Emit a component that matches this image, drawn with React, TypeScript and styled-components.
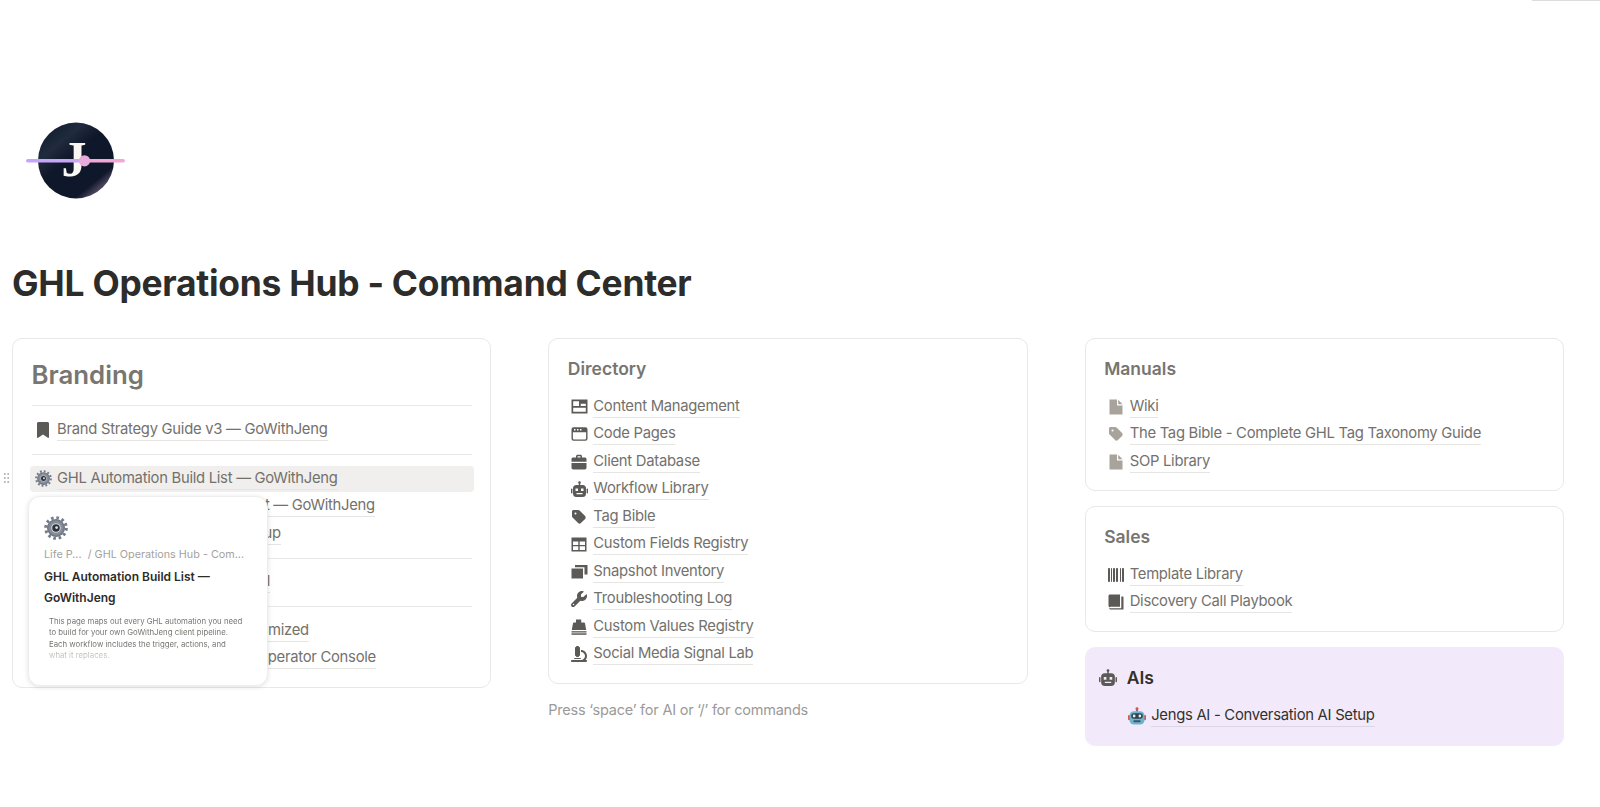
import React from "react";
import styled, { createGlobalStyle } from "styled-components";
import { FaBookmark, FaTag, FaWrench, FaMicroscope, FaBarcode } from "react-icons/fa6";

const Global = createGlobalStyle`
  html, body { margin: 0; padding: 0; background: #fff; }
  body { font-family: Inter, "Liberation Sans", sans-serif; overflow: hidden; }
`;

const Page = styled.div`
  display: flex;
  flex-direction: column;
  height: 807px;
  padding: 0 36px 0 12px;
  box-sizing: border-box;
`;
const TopLine = styled.div`
  align-self: flex-end;
  width: 68px;
  height: 1px;
  margin-right: -36px;
  background: #dcdcdc;
`;
const LogoSlot = styled.div`
  display: flex;
  margin: 118px 0 0 14px;
  height: 84px;
`;
const Title = styled.h1`
  margin: 59px 0 0;
  font-size: 35.4px;
  line-height: 44px;
  font-weight: 700;
  color: #2c2c2b;
  letter-spacing: -0.25px;
`;
const Columns = styled.div`
  display: grid;
  grid-template-columns: repeat(3, 1fr);
  column-gap: 57px;
  margin-top: 32px;
  align-items: start;
`;
const Column = styled.div`
  display: flex;
  flex-direction: column;
  gap: 15px;
`;
const Card = styled.section`
  position: relative;
  padding: 18px 18.5px 13.5px;
  border: 1px solid #e9e8e6;
  border-radius: 10px;
  background: #fff;
`;
const BrandCard = styled(Card)`
  padding-bottom: 14px;
`;
const AICard = styled.section`
  padding: 19px 14px 15px;
  border-radius: 10px;
  background: #f2eafa;
`;
const BigHeading = styled.h2`
  margin: 0 0 12px;
  font-size: 25.8px;
  line-height: 36px;
  font-weight: 600;
  color: #787671;
`;
const Heading = styled.h3`
  margin: 0 0 13px;
  font-size: 17.5px;
  line-height: 24px;
  font-weight: 600;
  color: #787570;
`;
const AIHeading = styled.h3`
  display: flex;
  align-items: center;
  gap: 10px;
  margin: 0 0 14px;
  font-size: 17.5px;
  line-height: 24px;
  font-weight: 600;
  color: #32302c;
`;
const Divider = styled.hr`
  margin: 11px 0 11px;
  border: 0;
  border-top: 1px solid #e9e8e6;
  &:first-of-type { margin: 0 0 11.5px; }
`;
const Row = styled.div<{ $active?: boolean; $indent?: number }>`
  display: flex;
  align-items: center;
  height: 25.5px;
  margin: 0 -2px 2px ${(p) => (p.$indent ? `${p.$indent}px` : "-2px")};
  border-radius: 4px;
  background: ${(p) => (p.$active ? "#f0efed" : "transparent")};
`;
const IconBox = styled.span<{ $muted?: boolean }>`
  display: flex;
  flex: none;
  align-items: center;
  justify-content: center;
  width: 27px;
  margin-right: 0.5px;
  color: ${(p) => (p.$muted ? "#a8a49c" : "#5c5a56")};
  font-size: 16px;
`;
const HeadIcon = styled.span`
  display: flex;
  flex: none;
  color: #5c5a56;
`;
const LinkText = styled.span<{ $dark?: boolean }>`
  font-size: 14.8px;
  line-height: 21px;
  letter-spacing: -0.27px;
  color: ${(p) => (p.$dark ? "#32302c" : "#73716c")};
  border-bottom: 1px solid ${(p) => (p.$dark ? "#ddd6e6" : "#e6e5e2")};
  white-space: nowrap;
`;
const Hint = styled.p`
  margin: 1px 0 0;
  font-size: 14.5px;
  line-height: 20px;
  letter-spacing: -0.22px;
  color: #9b9a97;
`;
const Handle = styled.span`
  position: absolute;
  left: -10px;
  top: 133px;
  width: 7px;
  height: 12px;
  background-image: radial-gradient(circle, #b9b8b5 1px, transparent 1.2px);
  background-size: 3.5px 4px;
`;
const Popover = styled.div`
  position: absolute;
  left: 15px;
  top: 157px;
  box-sizing: border-box;
  width: 240px;
  height: 190px;
  padding: 19px 15px 0;
  border: 1px solid #eeeeec;
  border-radius: 12px;
  background: #fff;
  box-shadow: 0 1px 5px rgba(0, 0, 0, 0.12);
`;
const Crumb = styled.div`
  margin-top: 3px;
  font-size: 10.8px;
  line-height: 16px;
  color: #a3a29e;
  white-space: nowrap;
`;
const PopTitle = styled.div`
  margin-top: 3px;
  font-size: 12px;
  line-height: 21px;
  font-weight: 600;
  color: #2c2c2b;
`;
const PopText = styled.p`
  margin: 8px 0 0 5px;
  font-size: 7.8px;
  line-height: 11.3px;
  width: 195px;
  background: linear-gradient(#6f6e6a 70%, #c2c1bd 85%);
  -webkit-background-clip: text;
  background-clip: text;
  color: transparent;
`;

const Logo = () => (
  <svg width="100" height="84" viewBox="0 0 100 84">
    <defs>
      <linearGradient id="lg" x1="0.15" y1="0.05" x2="0.9" y2="0.95">
        <stop offset="0" stopColor="#131c30" />
        <stop offset="0.22" stopColor="#202b3d" />
        <stop offset="0.42" stopColor="#0f172a" />
        <stop offset="0.8" stopColor="#0f172a" />
        <stop offset="1" stopColor="#8a7390" />
      </linearGradient>
      <linearGradient id="ll" x1="0" x2="1" y1="0" y2="0">
        <stop offset="0" stopColor="#c4a4fb" />
        <stop offset="0.55" stopColor="#c8a8f4" />
        <stop offset="0.6" stopColor="#f0a8d8" />
        <stop offset="1" stopColor="#f4a6d4" />
      </linearGradient>
    </defs>
    <circle cx="50" cy="41.500" r="38" fill="url(#lg)" />
    <text x="48" y="57" textAnchor="middle" fontFamily="'Liberation Serif', serif" fontWeight="700" fontSize="50" fill="#f9f7f2">J</text>
    <rect x="0" y="40" width="99" height="3.6" rx="1.8" fill="url(#ll)" />
    <circle cx="58.500" cy="41.800" r="5.600" fill="#e7abdc" />
  </svg>
);

const Gear = ({ size }: { size: number }) => (
  <svg width={size} height={size} viewBox="0 0 24 24">
    <defs>
      <radialGradient id="gg" cx="0.5" cy="0.5" r="0.55">
        <stop offset="0" stopColor="#3a3f48" />
        <stop offset="0.6" stopColor="#8b93a0" />
        <stop offset="1" stopColor="#59616e" />
      </radialGradient>
    </defs>
    <circle cx="12" cy="12" r="10.3" fill="none" stroke="#737b88" strokeWidth="3" strokeDasharray="2.6 2.8" />
    <circle cx="12" cy="12" r="9" fill="url(#gg)" />
    <circle cx="12" cy="12" r="4.3" fill="#2e323a" stroke="#d7dae0" strokeWidth="1.1" />
    <circle cx="12.6" cy="11.6" r="1.4" fill="#dfe2e8" />
  </svg>
);

const LayoutIcon = () => (
  <svg width="17" height="15" viewBox="0 0 17 15" fill="currentColor">
    <path fillRule="evenodd" d="M0.500 0.500h16v14h-16v-14Zm1.700 1.700V7h5.800V2.200H2.200Zm7.500 2.600v2.200h5.100V4.800H9.700Zm-7.500 3.900v4.100h12.600V8.700H2.200Z" />
  </svg>
);
const BrowserIcon = () => (
  <svg width="17" height="14" viewBox="0 0 17 14" fill="currentColor">
    <path fillRule="evenodd" d="M2.500 0.300h12a2 2 0 0 1 2 2v9.400a2 2 0 0 1-2 2h-12a2 2 0 0 1-2-2V2.300a2 2 0 0 1 2-2Zm-.6 4.900v6.400c0 .5.300.8.800.8h11.600c.5 0 .8-.3.8-.8V5.200H1.900ZM3 2h1.500v1.500H3V2Zm3 0h1.500v1.500H6V2Zm3 0h1.500v1.500H9V2Z" />
  </svg>
);
const CaseIcon = () => (
  <svg width="16" height="16" viewBox="0 0 16 16" fill="currentColor">
    <path fillRule="evenodd" d="M5 3.500V2.200C5 1.300 5.700.7 6.500.7h3c.8 0 1.500.6 1.500 1.500v1.300h2.800c1 0 1.700.7 1.700 1.700v2.600H.5V5.200c0-1 .7-1.700 1.700-1.700H5Zm1.500 0h3V2.200h-3v1.300Z" />
    <path d="M.5 9h15v4.800c0 1-.7 1.700-1.700 1.700H2.200c-1 0-1.700-.7-1.700-1.700V9Z" />
  </svg>
);
const RobotIcon = ({ size = 17 }: { size?: number }) => (
  <svg width={size} height={size} viewBox="0 0 17 17" fill="currentColor">
    <circle cx="8.500" cy="1.500" r="1.300" />
    <rect x="7.800" y="2" width="1.400" height="3" />
    <path fillRule="evenodd" d="M5.500 4h6a3.500 3.500 0 0 1 3.500 3.500v5a3.500 3.500 0 0 1-3.500 3.500h-6A3.500 3.500 0 0 1 2 12.500v-5A3.500 3.500 0 0 1 5.500 4ZM4.500 7.500v2.600h2.500V7.500H4.500Zm5.500 0v2.600h2.500V7.500H10ZM5.500 12v1.300h6V12h-6Z" />
    <rect x="0" y="7.500" width="1.400" height="5" rx=".7" />
    <rect x="15.600" y="7.500" width="1.400" height="5" rx=".7" />
  </svg>
);
const TableIcon = () => (
  <svg width="16" height="15" viewBox="0 0 16 15" fill="currentColor">
    <path fillRule="evenodd" d="M0.500 0.500h15v14h-15v-14Zm1.500 4v3.500h5.300V4.500H2Zm6.700 0v3.500H14V4.500H8.700ZM2 9.300v3.700h5.300V9.300H2Zm6.700 0v3.700H14V9.300H8.700Z" />
  </svg>
);
const CopyIcon = () => (
  <svg width="17" height="15" viewBox="0 0 17 15" fill="currentColor">
    <path d="M0.500 4.500h11.500v10H0.500z" />
    <path d="M4 1h12.500v9.500H13.500V3.300H4z" />
  </svg>
);
const RegisterIcon = () => (
  <svg width="16" height="16" viewBox="0 0 16 16" fill="currentColor">
    <path d="M5 .5h5.200v3H13c.5 0 .9.300 1 .8l1.200 6.700H.8L2 4.300c.1-.5.500-.8 1-.8h2V.5Z" />
    <rect x="0.500" y="12.200" width="15" height="1.300" />
    <rect x="0.500" y="14.300" width="15" height="1.500" />
  </svg>
);
const DocIcon = () => (
  <svg width="14" height="16" viewBox="0 0 14 16" fill="currentColor">
    <path d="M0.500 0.500h7.500v6h5.500v9H0.500z" />
    <path d="M9.200 0.800l4.300 4.500H9.200z" />
  </svg>
);
const BookIcon = () => (
  <svg width="16" height="16" viewBox="0 0 16 16" fill="currentColor">
    <path d="M2 .5h10v12.300H3c-1 0-1.500.3-1.800.8L.5 12V2C.5 1 1 .5 2 .5Z" />
    <path d="M13.300 2.500h1.200c.6 0 1 .4 1 1v12H3c-1 0-1.800-.5-2-1.300h13.300c-.5 0-1 0-1 0V2.500Z" />
  </svg>
);
const EmojiRobot = () => (
  <svg width="18" height="18" viewBox="0 0 17 17">
    <rect x="7.500" y="1.500" width="2" height="3" fill="#6f7f8f" />
    <circle cx="8.500" cy="1.700" r="1.400" fill="#e0504a" />
    <rect x="0" y="7.500" width="2" height="5" rx="1" fill="#d9584e" />
    <rect x="15" y="7.500" width="2" height="5" rx="1" fill="#d9584e" />
    <rect x="1.500" y="4" width="14" height="12.500" rx="4" fill="#6fb4cf" />
    <rect x="3" y="6" width="11" height="5" rx="2.500" fill="#33424f" />
    <circle cx="5.800" cy="8.500" r="1.300" fill="#e8eef2" />
    <circle cx="11.200" cy="8.500" r="1.300" fill="#e8eef2" />
    <rect x="5" y="12.500" width="7" height="2" rx="1" fill="#3c5566" />
  </svg>
);

type Item = { icon: React.ReactNode; text: string; muted?: boolean };

const directory: Item[] = [
  { icon: <LayoutIcon />, text: "Content Management" },
  { icon: <BrowserIcon />, text: "Code Pages" },
  { icon: <CaseIcon />, text: "Client Database" },
  { icon: <RobotIcon />, text: "Workflow Library" },
  { icon: <FaTag />, text: "Tag Bible" },
  { icon: <TableIcon />, text: "Custom Fields Registry" },
  { icon: <CopyIcon />, text: "Snapshot Inventory" },
  { icon: <FaWrench />, text: "Troubleshooting Log" },
  { icon: <RegisterIcon />, text: "Custom Values Registry" },
  { icon: <FaMicroscope />, text: "Social Media Signal Lab" },
];
const manuals: Item[] = [
  { icon: <DocIcon />, text: "Wiki", muted: true },
  { icon: <FaTag />, text: "The Tag Bible - Complete GHL Tag Taxonomy Guide", muted: true },
  { icon: <DocIcon />, text: "SOP Library", muted: true },
];
const sales: Item[] = [
  { icon: <FaBarcode />, text: "Template Library" },
  { icon: <BookIcon />, text: "Discovery Call Playbook" },
];

const Rows = ({ items }: { items: Item[] }) => (
  <>
    {items.map((it) => (
      <Row key={it.text}>
        <IconBox $muted={it.muted}>{it.icon}</IconBox>
        <LinkText>{it.text}</LinkText>
      </Row>
    ))}
  </>
);

export default function App() {
  return (
    <Page>
      <Global />
      <TopLine />
      <LogoSlot><Logo /></LogoSlot>
      <Title>GHL Operations Hub - Command Center</Title>
      <Columns>
        <Column>
          <BrandCard>
            <Handle />
            <BigHeading>Branding</BigHeading>
            <Divider />
            <Row>
              <IconBox><FaBookmark /></IconBox>
              <LinkText>Brand Strategy Guide v3 — GoWithJeng</LinkText>
            </Row>
            <Divider />
            <Row $active>
              <IconBox><Gear size={17} /></IconBox>
              <LinkText>GHL Automation Build List — GoWithJeng</LinkText>
            </Row>
            <Rows items={[
              { icon: <DocIcon />, text: "GHL Snapshot Master Build List — GoWithJeng" },
              { icon: <DocIcon />, text: "GoWithJeng Sales Pipeline Setup" },
            ]} />
            <Divider />
            <Rows items={[{ icon: <DocIcon />, text: "GoWithJeng Email Nurture Goal" }]} />
            <Divider />
            <Rows items={[
              { icon: <DocIcon />, text: "GoWithJeng Website Offer Optimized" },
              { icon: <DocIcon />, text: "GoWithJeng Voice Prompt — Operator Console" },
            ]} />
            <Popover>
              <Gear size={24} />
              <Crumb>Life P...&nbsp; / GHL Operations Hub - Com...</Crumb>
              <PopTitle>GHL Automation Build List — GoWithJeng</PopTitle>
              <PopText>
                This page maps out every GHL automation you need to build for your own GoWithJeng client pipeline. Each workflow includes the trigger, actions, and what it replaces.
              </PopText>
            </Popover>
          </BrandCard>
        </Column>
        <Column>
          <Card>
            <Heading>Directory</Heading>
            <Rows items={directory} />
          </Card>
          <Hint>Press ‘space’ for AI or ‘/’ for commands</Hint>
        </Column>
        <Column>
          <Card>
            <Heading>Manuals</Heading>
            <Rows items={manuals} />
          </Card>
          <Card>
            <Heading>Sales</Heading>
            <Rows items={sales} />
          </Card>
          <AICard>
            <AIHeading><HeadIcon><RobotIcon size={18} /></HeadIcon>AIs</AIHeading>
            <Row $indent={25}>
              <IconBox><EmojiRobot /></IconBox>
              <LinkText $dark>Jengs AI - Conversation AI Setup</LinkText>
            </Row>
          </AICard>
        </Column>
      </Columns>
    </Page>
  );
}
